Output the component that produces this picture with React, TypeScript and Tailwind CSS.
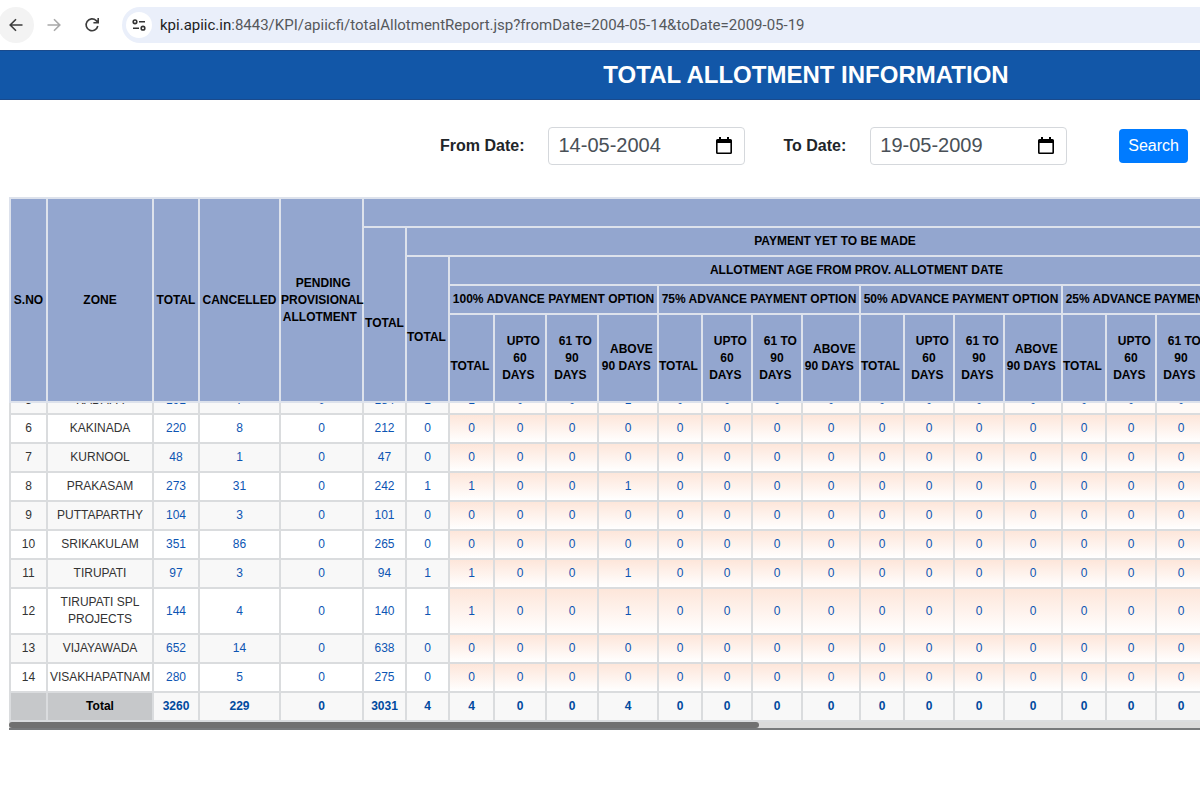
import { useState } from 'react';

type ZoneRow = {
  sno: string;
  zone: string;
  values: number[];
};

// TOTAL, CANCELLED, PENDING, TOTAL, TOTAL, then the 100% group (TOTAL, <60, 61-90, >90)
const ROWS: ZoneRow[] = [
  { sno: '6', zone: 'KAKINADA', values: [220, 8, 0, 212, 0, 0, 0, 0, 0] },
  { sno: '7', zone: 'KURNOOL', values: [48, 1, 0, 47, 0, 0, 0, 0, 0] },
  { sno: '8', zone: 'PRAKASAM', values: [273, 31, 0, 242, 1, 1, 0, 0, 1] },
  { sno: '9', zone: 'PUTTAPARTHY', values: [104, 3, 0, 101, 0, 0, 0, 0, 0] },
  { sno: '10', zone: 'SRIKAKULAM', values: [351, 86, 0, 265, 0, 0, 0, 0, 0] },
  { sno: '11', zone: 'TIRUPATI', values: [97, 3, 0, 94, 1, 1, 0, 0, 1] },
  { sno: '12', zone: 'TIRUPATI SPL PROJECTS', values: [144, 4, 0, 140, 1, 1, 0, 0, 1] },
  { sno: '13', zone: 'VIJAYAWADA', values: [652, 14, 0, 638, 0, 0, 0, 0, 0] },
  { sno: '14', zone: 'VISAKHAPATNAM', values: [280, 5, 0, 275, 0, 0, 0, 0, 0] },
];

const KADAPA: ZoneRow = { sno: '5', zone: 'KADAPA', values: [191, 7, 0, 184, 1, 1, 0, 0, 1] };
const TOTALS = [3260, 229, 0, 3031, 4, 4, 0, 0, 4];

const OPTIONS = ['100%', '75%', '50%', '25%'];
const REST = Array<number>(12).fill(0);

const TH = 'border-2 border-[#dde2ec] p-0 font-bold';
const TD = 'border-2 border-[#dadcde] px-0.5 py-[5px]';
const LINK = 'text-[#0d55b3]';

function CalendarIcon() {
  return (
    <svg width="18" height="18" viewBox="0 0 18 18" aria-hidden="true">
      <path
        fill="#000"
        fillRule="evenodd"
        d="M4 0h2v2h6V0h2v2h1.5A1.5 1.5 0 0 1 17 3.500v12a1.500 1.500 0 0 1-1.500 1.500h-13A1.500 1.500 0 0 1 1 15.500v-12A1.500 1.500 0 0 1 2.500 2H4zM2.600 6v9.400h12.800V6z"
      />
    </svg>
  );
}

function DateField({ id, label, initial }: { id: string; label: string; initial: string }) {
  const [value, setValue] = useState(initial);
  return (
    <div className="flex items-center gap-6">
      <label htmlFor={id} className="text-base font-bold text-[#212529]">{label}</label>
      <div className="flex h-[38px] w-[197px] items-center rounded-sm border border-[#d5d8dc] pr-[11px] pl-[9px]">
        <input
          id={id}
          type="text"
          value={value}
          onChange={(e) => setValue(e.target.value)}
          className="w-full min-w-0 pb-0.5 text-xl text-[#495057] outline-none"
        />
        <button type="button" aria-label="Open calendar"><CalendarIcon /></button>
      </div>
    </div>
  );
}

function BrowserBar() {
  return (
    <div className="flex h-[50px] items-center bg-white">
      <button type="button" aria-label="Back" className="flex size-9 -ml-0.5 items-center justify-center rounded-full bg-[#f3f3f3]">
        <svg width="14" height="14" viewBox="0 0 14 14" fill="none" stroke="#3c3c3c" strokeWidth="1.6">
          <path d="M13.500 7H1.500M7 1.200 1.200 7 7 12.800" />
        </svg>
      </button>
      <button type="button" aria-label="Forward" className="ml-0.5 flex size-9 items-center justify-center">
        <svg width="14" height="14" viewBox="0 0 14 14" fill="none" stroke="#a9a9a9" strokeWidth="1.6">
          <path d="M.5 7h12M7 1.200 12.800 7 7 12.800" />
        </svg>
      </button>
      <button type="button" aria-label="Reload" className="ml-0.5 flex size-9 items-center justify-center">
        <svg width="16" height="16" viewBox="0 0 16 16" fill="none" stroke="#3c3c3c" strokeWidth="1.6">
          <path d="M13.800 9A5.900 5.900 0 1 1 12.200 3.600L14 5.400M14.200 1v4.800H9.400" />
        </svg>
      </button>
      <div className="ml-3 flex h-9 flex-1 items-center rounded-l-full bg-[#eaeffa] pl-1">
        <button type="button" aria-label="View site information" className="flex size-[26px] items-center justify-center rounded-full bg-white">
          <svg width="14" height="12" viewBox="0 0 14 12" fill="none" stroke="#333" strokeWidth="1.600">
            <circle cx="3" cy="2.800" r="1.800" />
            <path d="M7 2.800h6M1 9.200h6" />
            <circle cx="11" cy="9.200" r="1.800" />
          </svg>
        </button>
        <span className="ml-2 whitespace-nowrap font-[Roboto,sans-serif] text-[15px] text-[#55585c]">
          <span className="text-[#222]">kpi.apiic.in</span>
          :8443/KPI/apiicfi/totalAllotmentReport.jsp?fromDate=2004-05-14&amp;toDate=2009-05-19
        </span>
      </div>
    </div>
  );
}

function ReportHead() {
  return (
    <thead className="bg-[#93a6cf] text-black">
      <tr className="h-[29px]">
        <th rowSpan={5} className={TH}>S.NO</th>
        <th rowSpan={5} className={TH}>ZONE</th>
        <th rowSpan={5} className={TH}>TOTAL</th>
        <th rowSpan={5} className={TH}>CANCELLED</th>
        <th rowSpan={5} className={TH}>
          &nbsp;PENDING<br />PROVISIONAL<br />ALLOTMENT&nbsp;
        </th>
        <th colSpan={18} className={TH} />
      </tr>
      <tr className="h-[29px]">
        <th rowSpan={4} className={TH}><br />TOTAL</th>
        <th colSpan={17} className={TH}>PAYMENT YET TO BE MADE</th>
      </tr>
      <tr className="h-[29px]">
        <th rowSpan={3} className={TH}><br />TOTAL&nbsp;</th>
        <th colSpan={16} className={TH}>ALLOTMENT AGE FROM PROV. ALLOTMENT DATE</th>
      </tr>
      <tr className="h-[29px]">
        {OPTIONS.map((option) => (
          <th key={option} colSpan={4} className={`${TH} whitespace-nowrap`}>
            {option} ADVANCE PAYMENT OPTION
          </th>
        ))}
      </tr>
      <tr className="h-[88px]">
        {OPTIONS.map((option) => [
          <th key={`${option}-total`} className={TH}><br />TOTAL&nbsp;</th>,
          <th key={`${option}-60`} className={TH}>&nbsp;&nbsp;UPTO<br />60<br />DAYS&nbsp;</th>,
          <th key={`${option}-90`} className={TH}>&nbsp;&nbsp;61 TO<br />90<br />DAYS&nbsp;</th>,
          <th key={`${option}-above`} className={TH}>&nbsp;&nbsp;ABOVE<br />90 DAYS&nbsp;</th>,
        ])}
      </tr>
    </thead>
  );
}

function ReportTable() {
  return (
    <table className="w-[1254px] table-fixed border-collapse text-center text-xs leading-[17px]">
      <colgroup>
        <col className="w-[37px]" />
        <col className="w-[106px]" />
        <col className="w-[46px]" />
        <col className="w-[81px]" />
        <col className="w-[83px]" />
        <col className="w-[43px]" />
        <col className="w-[43px]" />
        <col className="w-[45px]" />
        <col className="w-[52px]" />
        <col className="w-[52px]" />
        <col className="w-[60px]" />
        {OPTIONS.slice(1).map((option) => [
          <col key={`${option}-total`} className="w-[44px]" />,
          <col key={`${option}-60`} className="w-[50px]" />,
          <col key={`${option}-90`} className="w-[50px]" />,
          <col key={`${option}-above`} className="w-[58px]" />,
        ])}
      </colgroup>
      <ReportHead />
      <tbody className="text-[#333]">
        {/* row 5 is scrolled halfway under the header */}
        <tr className="h-3">
          {[KADAPA.sno, KADAPA.zone, ...KADAPA.values, ...REST].map((value, i) => (
            <td
              key={i}
              className={`border-2 border-t-0 border-[#dadcde] p-0 ${i >= 7 ? 'bg-[#fffaf7]' : 'bg-[#f8f8f8]'}`}
            >
              <div className="flex h-2.5 items-end justify-center overflow-hidden pb-1">
                {i < 2 ? <span>{value}</span> : <a href="#" className={LINK}>{value}</a>}
              </div>
            </td>
          ))}
        </tr>
        {ROWS.map((row) => (
          <tr key={row.sno} className="odd:bg-[#f8f8f8] even:bg-white">
            <td className={TD}>{row.sno}</td>
            <td className={TD}>{row.zone}</td>
            {[...row.values, ...REST].map((value, i) => (
              <td
                key={i}
                className={i >= 5 ? `${TD} bg-linear-to-b from-[#fde6da] to-white` : TD}
              >
                <a href="#" className={LINK}>{value}</a>
              </td>
            ))}
          </tr>
        ))}
        <tr className="bg-[#f8f8f8] font-bold">
          <td className={`${TD} bg-[#c6c8ca]`} />
          <td className={`${TD} bg-[#c6c8ca] text-black`}>Total</td>
          {[...TOTALS, ...REST].map((value, i) => (
            <td key={i} className={TD}>
              <a href="#" className="text-[#004a9f]">{value}</a>
            </td>
          ))}
        </tr>
      </tbody>
    </table>
  );
}

export default function App() {
  return (
    <div className="min-h-screen overflow-x-hidden bg-white font-['Liberation_Sans',Arial,sans-serif]">
      <BrowserBar />
      <header className="border-y border-[#1a4a8c] bg-[#1257a8] py-2 pl-[412px]">
        <h1 className="text-center text-2xl font-bold whitespace-nowrap text-white">TOTAL ALLOTMENT INFORMATION</h1>
      </header>

      <form className="flex items-center justify-end pt-[27px] pr-3 pb-8" onSubmit={(e) => e.preventDefault()}>
        <DateField id="from-date" label="From Date:" initial="14-05-2004" />
        <div className="ml-[38px]">
          <DateField id="to-date" label="To Date:" initial="19-05-2009" />
        </div>
        <button type="submit" className="ml-[52px] h-[34px] rounded-sm bg-[#007bff] px-[9px] text-base text-white">
          Search
        </button>
      </form>

      <main className="pl-[9px]">
        <div className="overflow-x-auto [scrollbar-width:none]">
          <ReportTable />
        </div>
        <div className="border-b-2 border-[#77797b] bg-[#dadada]">
          <div className="h-1.5 w-[63%] rounded-full bg-[#707070]" />
        </div>
      </main>
    </div>
  );
}
